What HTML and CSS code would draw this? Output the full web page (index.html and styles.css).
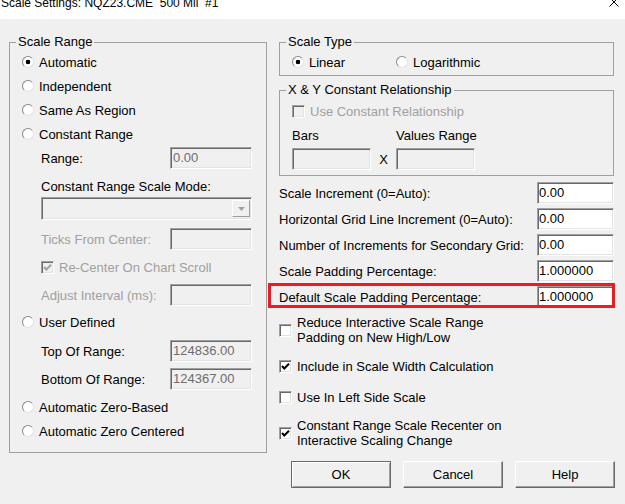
FILE: index.html
```html
<!DOCTYPE html>
<html lang="en">
<head>
    <meta charset="UTF-8">
    <title>Scale Settings</title>
    <link rel="stylesheet" href="styles.css">
</head>
<body>
<div class="dialog">
    <!-- title bar (top is cut off in the capture) -->
    <div class="titlebar">
        <span class="title">Scale Settings: NQZ23.CME  500 Mil  #1</span>
        <svg class="close" width="10" height="10" viewBox="0 0 10 10"><path d="M0.5 0.5L9.5 9.5M9.5 0.5L0.5 9.5" stroke="#000" stroke-width="1"/></svg>
    </div>

    <div class="content">
        <!-- left: scale range -->
        <fieldset class="group range-group">
            <legend>Scale Range</legend>
            <div class="group-body">
                <div class="row"><span class="radio on"></span>Automatic</div>
                <div class="row"><span class="radio"></span>Independent</div>
                <div class="row"><span class="radio"></span>Same As Region</div>
                <div class="row"><span class="radio"></span>Constant Range</div>
                <div class="row sub field"><span>Range:</span><span class="input disabled">0.00</span></div>
                <div class="sub mode-label">Constant Range Scale Mode:</div>
                <div class="sub combo-wrap">
                    <div class="combo">
                        <span class="combo-btn"><svg width="7" height="4" viewBox="0 0 7 4"><path d="M0 0H7L3.5 4Z" fill="#a0a0a0"/></svg></span>
                    </div>
                </div>
                <div class="row sub field ticks muted"><span>Ticks From Center:</span><span class="input disabled"></span></div>
                <div class="row sub recenter muted">
                    <span class="check dis"><svg width="11" height="11" viewBox="0 0 11 11"><path d="M2 5L4.3 7.5L9 2.7" fill="none" stroke="#a0a0a0" stroke-width="2"/></svg></span>Re-Center On Chart Scroll
                </div>
                <div class="row sub field muted"><span>Adjust Interval (ms):</span><span class="input disabled"></span></div>
                <div class="row user-defined"><span class="radio"></span>User Defined</div>
                <div class="row sub field top-range"><span>Top Of Range:</span><span class="input disabled">124836.00</span></div>
                <div class="row sub field bottom-range"><span>Bottom Of Range:</span><span class="input disabled">124367.00</span></div>
                <div class="row zero-based"><span class="radio"></span>Automatic Zero-Based</div>
                <div class="row"><span class="radio"></span>Automatic Zero Centered</div>
            </div>
        </fieldset>

        <!-- right column -->
        <div class="right-col">
            <fieldset class="group type-group">
                <legend>Scale Type</legend>
                <div class="group-body row">
                    <span class="choice"><span class="radio on"></span>Linear</span>
                    <span class="choice"><span class="radio"></span>Logarithmic</span>
                </div>
            </fieldset>

            <fieldset class="group xy-group">
                <legend>X &amp; Y Constant Relationship</legend>
                <div class="group-body">
                    <div class="row xy-check muted"><span class="check dis"></span>Use Constant Relationship</div>
                    <div class="row"><span class="cell">Bars</span><span class="cell">Values Range</span></div>
                    <div class="xy-inputs">
                        <span class="input disabled small"></span>
                        <span class="times">X</span>
                        <span class="input disabled small"></span>
                    </div>
                </div>
            </fieldset>

            <div class="settings">
                <div class="setting"><span>Scale Increment (0=Auto):</span><span class="input value">0.00</span></div>
                <div class="setting"><span>Horizontal Grid Line Increment (0=Auto):</span><span class="input value">0.00</span></div>
                <div class="setting"><span>Number of Increments for Secondary Grid:</span><span class="input value">0.00</span></div>
                <div class="setting"><span>Scale Padding Percentage:</span><span class="input value">1.000000</span></div>
                <div class="setting highlight"><span>Default Scale Padding Percentage:</span><span class="input value">1.000000</span></div>
            </div>

            <div class="option reduce">
                <span class="check"></span>
                <span class="multi">Reduce Interactive Scale Range<br>Padding on New High/Low</span>
            </div>
            <div class="option include">
                <span class="check"><svg width="11" height="11" viewBox="0 0 11 11"><path d="M2 5L4.3 7.5L9 2.7" fill="none" stroke="#000" stroke-width="2"/></svg></span>
                <span>Include in Scale Width Calculation</span>
            </div>
            <div class="option left-side">
                <span class="check"></span>
                <span>Use In Left Side Scale</span>
            </div>
            <div class="option recenter-opt">
                <span class="check"><svg width="11" height="11" viewBox="0 0 11 11"><path d="M2 5L4.3 7.5L9 2.7" fill="none" stroke="#000" stroke-width="2"/></svg></span>
                <span class="multi">Constant Range Scale Recenter on<br>Interactive Scaling Change</span>
            </div>

            <div class="buttons">
                <button class="btn default">OK</button>
                <button class="btn">Cancel</button>
                <button class="btn">Help</button>
            </div>
        </div>
    </div>
</div>
</body>
</html>
```

FILE: styles.css
```css
* {
    margin: 0;
    padding: 0;
    box-sizing: border-box;
}

body {
    font-family: 'Liberation Sans', Arial, sans-serif;
    font-size: 13px;
    color: #000;
    background-color: #f0f0f0;
}

.dialog {
    width: 625px;
    height: 504px;
    overflow: hidden;
}

/* 标题栏 */
.titlebar {
    height: 19px;
    background-color: #fff;
    display: flex;
    justify-content: space-between;
    padding: 0 6px 0 1px;
    overflow: hidden;
}
.title {
    font-size: 12px;
    line-height: 14px;
    margin-top: -4px;
    white-space: pre;
}
.close {
    margin-top: -3px;
}

.content {
    display: grid;
    grid-template-columns: 258px 335px;
    column-gap: 12px;
    align-items: start;
    padding: 15px 0 0 9px;
}

/* group boxes */
.group {
    border: 1px solid #a0a0a0;
    padding: 0 14px 9px 6px;
    min-width: 0;
    width: 100%;
}
.group legend {
    padding: 0 2px;
    line-height: 16px;
}
.group-body {
    padding-left: 6px;
}

.row {
    display: flex;
    align-items: center;
    height: 24px;
}
.sub {
    padding-left: 19px;
}
.field {
    justify-content: space-between;
}
.muted {
    color: #a0a0a0;
}

.mode-label {
    margin-top: 9px;
    line-height: 16px;
}
.combo-wrap {
    margin-top: 2px;
}
.ticks {
    margin-top: 7px;
}
.recenter {
    height: 32px;
}
.user-defined {
    margin-top: 3px;
}
.top-range {
    margin-top: 5px;
}
.bottom-range,
.zero-based {
    margin-top: 4px;
}

/* radio buttons */
.radio {
    width: 12px;
    height: 12px;
    flex-shrink: 0;
    margin-right: 5px;
    border-radius: 50%;
    border: 1px solid;
    border-color: #8a8a8a #e3e3e3 #e3e3e3 #8a8a8a;
    background-color: #fff;
}
.radio.on {
    background: radial-gradient(circle, #000 0, #000 2px, #fff 2.6px);
}

/* check boxes */
.check {
    width: 13px;
    height: 13px;
    flex-shrink: 0;
    margin-right: 5px;
    border: 1px solid;
    border-color: #a0a0a0 #fff #fff #a0a0a0;
    box-shadow: inset 1px 1px #696969, inset -1px -1px #e3e3e3;
    background-color: #fff;
}
.check svg {
    display: block;
}
.check.dis {
    background-color: #f0f0f0;
}

/* sunken edit boxes */
.input {
    display: block;
    width: 82px;
    height: 22px;
    padding: 0 2px;
    line-height: 20px;
    border: 1px solid;
    border-color: #a0a0a0 #fff #fff #a0a0a0;
    box-shadow: inset 1px 1px #696969, inset -1px -1px #e3e3e3;
    background-color: #fff;
    flex-shrink: 0;
}
.input.disabled {
    background-color: #f0f0f0;
    color: #6d6d6d;
}
.input.small {
    width: 79px;
}
.input.value {
    width: 77px;
    padding: 0 1px;
}

/* disabled drop-down */
.combo {
    height: 23px;
    display: flex;
    justify-content: flex-end;
    align-items: center;
    padding-right: 1px;
    border: 1px solid;
    border-color: #a0a0a0 #fff #fff #a0a0a0;
    box-shadow: inset 1px 1px #696969, inset -1px -1px #e3e3e3;
    background-color: #f0f0f0;
}
.combo-btn {
    width: 18px;
    height: 17px;
    display: flex;
    align-items: center;
    justify-content: center;
    border: 1px solid;
    border-color: #fff #a0a0a0 #a0a0a0 #fff;
}

/* right column */
.right-col {
    display: flex;
    flex-direction: column;
}
.type-group {
    padding: 0 6px 1px 6px;
}
.choice {
    display: flex;
    align-items: center;
    width: 104px;
}
.xy-group {
    margin-top: 6px;
    padding: 0 6px 5px 6px;
}
.xy-check {
    margin-top: 1px;
}
.cell {
    width: 104px;
}
.xy-inputs {
    display: flex;
    align-items: center;
    margin-top: 1px;
}
.times {
    width: 25px;
    text-align: center;
}

.settings {
    margin-top: 4px;
}
.setting {
    display: flex;
    align-items: center;
    justify-content: space-between;
    height: 26px;
}
/* 红色标注框 */
.highlight {
    position: relative;
}
.highlight::after {
    content: '';
    position: absolute;
    left: -11px;
    right: -1px;
    top: -1px;
    bottom: 2px;
    border: 3px solid #ed1c24;
}

.option {
    display: flex;
    align-items: center;
}
.multi {
    line-height: 15px;
}
.reduce {
    margin-top: 4px;
    height: 32px;
}
.include {
    margin-top: 8px;
    height: 24px;
}
.left-side {
    margin-top: 7px;
    height: 24px;
}
.recenter-opt {
    margin-top: 9px;
    height: 30px;
}

/* buttons */
.buttons {
    display: flex;
    gap: 12px;
    margin: 13px 0 0 12px;
}
.btn {
    width: 100px;
    height: 27px;
    flex-shrink: 0;
    font: inherit;
    color: #000;
    background-color: #f0f0f0;
    border: 1px solid;
    border-color: #fff #696969 #696969 #fff;
    box-shadow: inset -1px -1px #a0a0a0;
}
.btn.default {
    border-color: #696969;
    box-shadow: inset 1px 1px #fff, inset -1px -1px #a0a0a0;
}
```
